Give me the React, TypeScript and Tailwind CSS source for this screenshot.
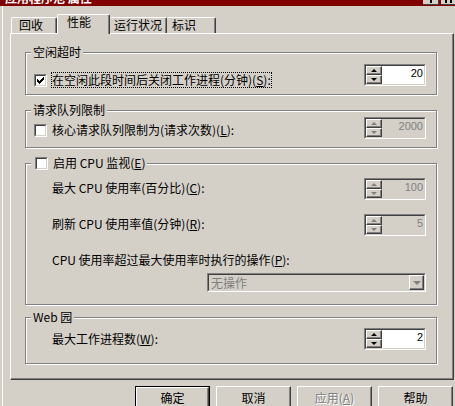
import React from "react";

const sunkenOuter = "border border-t-[#808080] border-l-[#808080] border-r-white border-b-white";
const sunkenInner = "border border-t-[#404040] border-l-[#404040] border-r-[#d4d0c8] border-b-[#d4d0c8]";
const raised =
  "border border-t-white border-l-white border-r-[#404040] border-b-[#404040] shadow-[inset_-1px_-1px_0_#808080]";
const grayText = "text-[#808080] [text-shadow:1px_1px_0_#fff]";

function CheckBox({ checked }: { checked?: boolean }) {
  return (
    <div className={`w-[13px] h-[13px] shrink-0 ${sunkenOuter}`}>
      <div className={`w-full h-full bg-white flex items-center justify-center ${sunkenInner}`}>
        {checked && (
          <svg width="7" height="7" viewBox="0 0 7 7" shapeRendering="crispEdges">
            <path
              d="M0 2h1v3h-1zM1 3h1v3h-1zM2 4h1v3h-1zM3 3h1v3h-1zM4 2h1v3h-1zM5 1h1v3h-1zM6 0h1v3h-1z"
              fill="#000"
            />
          </svg>
        )}
      </div>
    </div>
  );
}

function SpinBtn({ up, disabled }: { up?: boolean; disabled?: boolean }) {
  return (
    <div className={`h-[9px] w-full bg-[#d4d0c8] flex items-center justify-center ${raised}`}>
      {up ? (
        <div
          className={`w-0 h-0 border-l-[3px] border-r-[3px] border-b-[3px] border-l-transparent border-r-transparent ${
            disabled ? "border-b-[#808080]" : "border-b-black"
          }`}
        />
      ) : (
        <div
          className={`w-0 h-0 border-l-[3px] border-r-[3px] border-t-[3px] border-l-transparent border-r-transparent ${
            disabled ? "border-t-[#808080]" : "border-t-black"
          }`}
        />
      )}
    </div>
  );
}

function Spinner({ value, disabled }: { value: string; disabled?: boolean }) {
  return (
    <div className={`w-[62px] h-[22px] shrink-0 ${sunkenOuter}`}>
      <div className={`flex h-full ${sunkenInner} ${disabled ? "bg-[#d4d0c8]" : "bg-white"}`}>
        <div className="flex flex-col w-[16px] h-full">
          <SpinBtn up disabled={disabled} />
          <SpinBtn disabled={disabled} />
        </div>
        <div
          className={`flex-1 text-right pr-[1px] pt-[1px] leading-[13px] text-[11px] font-['Liberation_Sans',sans-serif] ${
            disabled ? "text-[#808080]" : "text-black"
          }`}
        >
          {value}
        </div>
      </div>
    </div>
  );
}

function Group({
  label,
  className,
  children,
}: {
  label: React.ReactNode;
  className: string;
  children: React.ReactNode;
}) {
  return (
    <div
      className={`relative w-[412px] ml-[14px] border border-[#808080] shadow-[inset_1px_1px_0_#fff,1px_1px_0_#fff] ${className}`}
    >
      <div className="absolute -top-[8px] left-[5px] px-[2px] bg-[#d4d0c8] leading-[14px] flex items-center">
        {label}
      </div>
      {children}
    </div>
  );
}

function Button({ children, isDefault, disabled }: { children: React.ReactNode; isDefault?: boolean; disabled?: boolean }) {
  return (
    <div className={`w-[75px] h-[23px] shrink-0 ${isDefault ? "border border-black" : ""}`}>
      <div className={`w-full h-full flex items-center justify-center leading-[14px] ${raised}`}>
        <span className={disabled ? grayText : ""}>{children}</span>
      </div>
    </div>
  );
}

export default function App() {
  return (
    <div className="w-[455px] h-[406px] overflow-hidden bg-[#d4d0c8] text-[12px] text-black flex flex-col font-['Noto_Sans_CJK_SC','Noto_Sans',sans-serif]">
      {/* title bar (mostly scrolled off) */}
      <div className="h-[6px] shrink-0 bg-[#800000] flex justify-between overflow-hidden">
        <div className="pl-[5px] -mt-[9px] leading-[14px] text-white font-bold">应用程序池 属性</div>
        <div className="flex gap-[2px] pr-[0px]">
          <div className="w-[16px] h-[5px] bg-[#d4d0c8] border-b border-b-[#404040] border-r border-r-[#404040] flex justify-center">
            <div className="w-[2px] h-[3px] bg-black" />
          </div>
          <div className="w-[14px] h-[5px] bg-[#d4d0c8] border-b border-b-[#404040] flex justify-center gap-[3px]">
            <div className="w-[2px] h-[3px] bg-black" />
            <div className="w-[2px] h-[3px] bg-black" />
          </div>
        </div>
      </div>

      <div className="flex flex-1">
        <div className="w-[3px] border-r border-white" />
        <div className="flex-1 flex flex-col pl-[7px] pt-[8px]">
          {/* tabs */}
          <div className="flex items-end pl-[1px]">
            <div className="w-[46px] h-[16px] pl-[7px] leading-[14px] border-t border-l border-white border-r border-r-[#404040] rounded-t-[2px] shadow-[inset_-1px_0_0_#808080]">
              回收
            </div>
            <div className="relative z-10 -mb-[1px] w-[53px] h-[20px] pl-[9px] leading-[14px] bg-[#d4d0c8] border-t border-l border-white border-r border-r-[#404040] rounded-t-[2px] shadow-[inset_-1px_0_0_#808080]">
              性能
            </div>
            <div className="w-[57px] h-[16px] pl-[4px] leading-[14px] border-t border-white border-r border-r-[#404040] rounded-t-[2px] shadow-[inset_-1px_0_0_#808080]">
              运行状况
            </div>
            <div className="w-[49px] h-[16px] pl-[5px] leading-[14px] border-t border-white border-r border-r-[#404040] rounded-t-[2px] shadow-[inset_-1px_0_0_#808080]">
              标识
            </div>
          </div>

          {/* tab panel */}
          <div className="w-[444px] h-[347px] border border-t-white border-l-white border-r-[#404040] border-b-[#404040] shadow-[inset_-1px_-1px_0_#808080] flex flex-col">
            <Group label="空闲超时" className="mt-[18px] h-[43px]">
              <div className="flex justify-between items-start pt-[11px] pl-[8px] pr-[10px]">
                <div className="flex items-center gap-[4px] mt-[8px]">
                  <CheckBox checked />
                  <div className="border border-dotted border-black leading-[14px]">
                    在空闲此段时间后关闭工作进程(分钟)(<u>S</u>):
                  </div>
                </div>
                <Spinner value="20" />
              </div>
            </Group>

            <Group label="请求队列限制" className="mt-[15px] h-[38px]">
              <div className="flex justify-between items-start pt-[6px] pl-[8px] pr-[10px]">
                <div className="flex items-center gap-[4px] mt-[5px]">
                  <CheckBox />
                  <div className="border border-transparent leading-[14px]">
                    核心请求队列限制为(请求次数)(<u>L</u>):
                  </div>
                </div>
                <Spinner value="2000" disabled />
              </div>
            </Group>

            <Group
              label={
                <div className="flex items-center gap-[4px] pl-[2px]">
                  <CheckBox />
                  <span className="pl-[1px]">
                    启用 CPU 监视(<u>E</u>)
                  </span>
                </div>
              }
              className="mt-[15px] h-[142px]"
            >
              <div className="flex flex-col pt-[14px] pl-[26px] pr-[10px]">
                <div className="flex justify-between items-center">
                  <span className="leading-[14px] -mt-[3px]">
                    最大 CPU 使用率(百分比)(<u>C</u>):
                  </span>
                  <Spinner value="100" disabled />
                </div>
                <div className="flex justify-between items-center mt-[14px]">
                  <span className="leading-[14px] -mt-[3px]">
                    刷新 CPU 使用率值(分钟)(<u>R</u>):
                  </span>
                  <Spinner value="5" disabled />
                </div>
                <div className="mt-[17px] leading-[14px]">
                  CPU 使用率超过最大使用率时执行的操作(<u>P</u>):
                </div>
                <div className={`self-end mt-[6px] w-[219px] h-[19px] ${sunkenOuter}`}>
                  <div className={`flex h-full bg-[#d4d0c8] ${sunkenInner}`}>
                    <div className="flex-1 pl-[2px] leading-[15px] text-[#808080]">无操作</div>
                    <div className={`w-[15px] h-full flex items-center justify-center ${raised}`}>
                      <div className="w-0 h-0 border-l-[4px] border-r-[4px] border-t-[4px] border-l-transparent border-r-transparent border-t-[#808080]" />
                    </div>
                  </div>
                </div>
              </div>
            </Group>

            <Group label="Web 园" className="mt-[12px] h-[47px]">
              <div className="flex justify-between items-center pt-[10px] pl-[26px] pr-[10px]">
                <span className="leading-[14px]">
                  最大工作进程数(<u>W</u>):
                </span>
                <Spinner value="2" />
              </div>
            </Group>
          </div>

          {/* dialog buttons */}
          <div className="flex justify-end gap-[6px] pr-[2px] mt-[6px]">
            <Button isDefault>确定</Button>
            <Button>取消</Button>
            <Button disabled>
              应用(<u>A</u>)
            </Button>
            <Button>帮助</Button>
          </div>
        </div>
      </div>
    </div>
  );
}
